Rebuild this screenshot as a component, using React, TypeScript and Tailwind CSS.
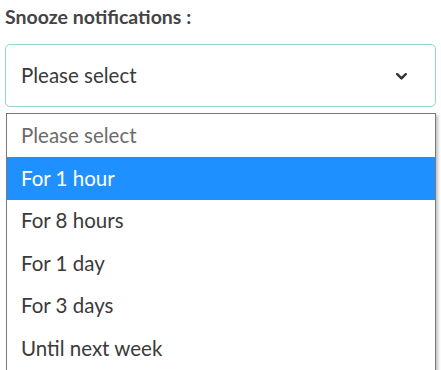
import { useState } from "react";

const options = ["For 1 hour", "For 8 hours", "For 1 day", "For 3 days", "Until next week"];

export default function App() {
  const [active, setActive] = useState(0);

  return (
    <div className="h-[370px] w-[441px] overflow-hidden bg-white font-['Lato','Liberation_Sans',sans-serif] text-[#444]">
      <div className="px-[5px] pt-[5px]">
        <label className="block text-[19.5px] font-bold leading-[24px] text-[#444]">Snooze notifications :</label>
      </div>

      {/* Select trigger */}
      <div className="mx-[5px] mt-[15px] flex h-[63px] w-[431px] items-center justify-between rounded-[5px] border border-[#8ed6c5] pl-[15px] pr-[28px]">
        <span className="text-[20.5px] leading-none text-[#3a3a3a]">Please select</span>
        <svg width="11" height="7" viewBox="0 0 11 7" fill="none" className="mt-[2px]">
          <polyline points="1.2,1.2 5.5,5.4 9.8,1.2" stroke="#333" strokeWidth="2.4" strokeLinecap="round" strokeLinejoin="round" />
        </svg>
      </div>

      {/* Native-looking option list */}
      <div className="ml-[6px] mt-[6px] w-[430px] border border-[#7a7a7a] bg-white shadow-[2px_2px_3px_rgba(0,0,0,0.25)]">
        <div className="flex h-[43px] items-center pl-[14px] text-[20.5px] text-[#6b6b6b]">Please select</div>
        {options.map((o, i) => (
          <div
            key={o}
            onMouseEnter={() => setActive(i)}
            className={
              i === active
                ? "flex h-[42.5px] items-center bg-[#1e90ff] pl-[14px] text-[20.5px] text-white"
                : "flex h-[42.5px] items-center pl-[14px] text-[20.5px] text-[#3a3a3a]"
            }
          >
            {o}
          </div>
        ))}
      </div>
    </div>
  );
}
